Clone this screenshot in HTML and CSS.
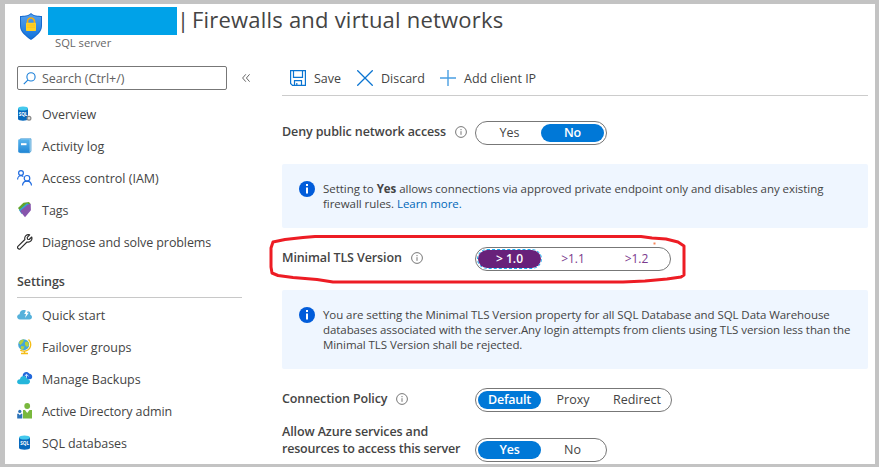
FILE: index.html
```html
<!DOCTYPE html>
<html lang="en">
<head>
<meta charset="utf-8">
<title>Firewalls and virtual networks</title>
<link rel="stylesheet" href="styles.css">
</head>
<body>
<div class="page">
  <header class="header">
    <svg class="shield" viewBox="0 0 22 27"><defs><linearGradient id="sh" x2="0" y2="1"><stop stop-color="#55a2ef"/><stop offset="1" stop-color="#1273dc"/></linearGradient></defs><path d="M11 0C8 3 4 2.600 0 3v10c0 6 6 10.500 11 14 5-3.500 11-8 11-14V3c-4-.4-8 0-11-3z" fill="#1769cd"/><path d="M11 1.200C8 3.700 4 3.500 1 3.900V13c0 5.500 5.500 9.500 10 12.700C15.500 22.500 21 18.500 21 13V3.900c-3-.4-7-.2-10-2.700z" fill="url(#sh)"/><path d="M7.500 10V8.500a3.500 3.500 0 0 1 7 0V10" fill="none" stroke="#f3ab12" stroke-width="1.700"/><rect x="6" y="9.700" width="10" height="8.300" rx=".7" fill="#ffd226"/><path d="M7 12h8M7 14.200h8" stroke="#f8b91b" stroke-width=".7"/></svg>
    <div class="heading">
      <div class="title-row"><span class="redacted"></span><span class="bar">|</span><h1>Firewalls and virtual networks</h1></div>
      <div class="subtitle">SQL server</div>
    </div>
  </header>
  <div class="body">
    <aside class="sidebar">
      <div class="search-row">
        <div class="search"><svg width="13" height="13" viewBox="0 0 13 13" fill="none" stroke="#1a7fd8" stroke-width="1.100"><circle cx="8" cy="4.900" r="4.100"/><path d="M5 7.900.8 12.200"/></svg><span>Search (Ctrl+/)</span></div>
        <svg class="collapse" width="8" height="8" viewBox="0 0 8 8" fill="none" stroke="#666"><path d="M3.800.3.600 4l3.200 3.700M7.600.3 4.400 4l3.200 3.700"/></svg>
      </div>
      <nav class="nav">
        <a class="item"><svg class="icon" viewBox="0 0 16 16"><path d="M1 2.500v10.500C1 15.300 11 15.300 11 13V2.500z" fill="#0869bd"/><ellipse cx="6" cy="2.500" rx="5" ry="2" fill="#45c9ed"/><text x="1.700" y="9.500" class="sql">SQL</text><circle cx="12" cy="12.300" r="1.900" fill="#ddd" stroke="#888" stroke-width="1.200"/></svg><span>Overview</span></a>
        <a class="item"><svg class="icon" viewBox="0 0 16 16"><defs><linearGradient id="bk" x2="0" y2="1"><stop stop-color="#5ab5ed"/><stop offset="1" stop-color="#2086d5"/></linearGradient></defs><path d="M3.500.8H14v12.500l-1.500 1.400H3.500z" fill="#b9e0f5" stroke="#338fcf" stroke-width=".7"/><path d="M2.300 1.300h10.400v13.400H2.300A1.100 1.100 0 0 1 1.200 13.600V2.400a1.100 1.100 0 0 1 1.100-1.100z" fill="url(#bk)"/><path d="M4 6.200h5.500" stroke="#fff" stroke-width="2"/></svg><span>Activity log</span></a>
        <a class="item"><svg class="icon" viewBox="0 0 16 16" fill="none" stroke="#1f6be0" stroke-width="1.200"><circle cx="4" cy="3" r="2.400"/><path d="M.6 9.500C.6 7.500 2 5.700 4 5.700c1 0 1.700.3 2.300.9"/><circle cx="10" cy="8.300" r="2.800"/><path d="M5.500 15.500c.2-2.700 2-4.400 4.500-4.400s4.300 1.700 4.500 4.400"/></svg><span class="t-iam">Access control (IAM)</span></a>
        <a class="item"><svg class="icon" viewBox="0 0 16 16"><path d="M1 6 6.500.7 12 0l1.500 2L5 11.500z" fill="#63a52b"/><path d="M2 8 10 1.200l2.500 1.300L4.500 12z" fill="#31a4d4"/><path d="m3 9 8-6.500 2.700-.7.200 6.500L8 15.300z" fill="#8755ac"/></svg><span>Tags</span></a>
        <a class="item"><svg class="icon" viewBox="0 0 16 16" fill="none" stroke="#2d2d2d" stroke-width="1.150" stroke-linejoin="round"><path d="M12.700.8C9.800-.1 7 2.400 7.900 5.500L.9 12.300c-1.200 1.500.9 3.600 2.400 2.400L10 8c3.300.8 5.700-2 4.700-5l-2.500 2.500-1.700-.3-.3-1.800z"/></svg><span class="t-diag">Diagnose and solve problems</span></a>
        <h2 class="section">Settings</h2>
        <a class="item"><svg class="icon" viewBox="0 0 16 16"><path d="M3 12.500C-.8 12.500-.7 7.400 2.600 7.200 2.600 3 7.500 1.600 9.600 4.500c3-1 4.300 1.300 3.600 3.200C16 8.500 15.300 12.500 12.500 12.500z" fill="#55b1db"/><path d="M9.700 2 7.200 7h1.800l-1 4L11.800 5.700H9.900L11.800 2z" fill="#fff"/></svg><span>Quick start</span></a>
        <a class="item"><svg class="icon" viewBox="0 0 16 16"><path d="M11.500.5C15.700 5 13.500 11.500 7.500 12.100c-1.500.1-3-.2-4.200-1" fill="none" stroke="#f5bd16" stroke-width="1.300"/><path d="M7.500 12V14.500M4 14.500h7" stroke="#f5bd16" stroke-width="1.500"/><circle cx="6.700" cy="5.700" r="5.500" fill="#43a6d9"/><path d="M2 4c1-3 4-3.800 5-3.200l-1 2.500L3.500 6zM8 3l3-.5 1 4-2 1.500-2-2zM4 7l3.500.5L6 11 3.800 10z" fill="#b4d13c"/></svg><span>Failover groups</span></a>
        <a class="item"><svg class="icon" viewBox="0 0 16 16"><path d="M6.500 7.500C3.500 2.500 9.500-1.200 12.500 2.800 16 3 16 8 13 8.200z" fill="#2168db"/><path d="M9.500 7.500V3.400L7.500 5.200M9.500 3.400 11.500 5.200" fill="none" stroke="#d4e7ff"/><path d="M3 13.300c-4 0-3.700-5 0-5 .5-4.300 6.600-4 6.800-.5 4.200-.1 4.200 5.500.4 5.500z" fill="#24b6db"/></svg><span>Manage Backups</span></a>
        <a class="item"><svg class="icon" viewBox="0 0 16 16"><circle cx="10.200" cy="3" r="2.900" fill="#79b83d"/><path d="M6 7h2l2.200 3L12.500 7H15v8.500H6z" fill="#79b83d"/><circle cx="2.800" cy="8.400" r="1.600" fill="#2c73b9"/><path d="M.2 10.700h1.500l1.200 1.500 1.100-1.500h1.300v4.800H.2z" fill="#2c73b9"/></svg><span class="t-ad">Active Directory admin</span></a>
        <a class="item"><svg class="icon" viewBox="0 0 16 16"><path d="M2 2.500v10.500c0 2.300 11 2.300 11 0V2.500z" fill="#0869bd"/><ellipse cx="7.500" cy="2.500" rx="5.500" ry="2" fill="#45c9ed"/><text x="3.300" y="10" class="sql">SQL</text></svg><span class="t-dbs">SQL databases</span></a>
      </nav>
    </aside>
    <main class="main">
      <div class="toolbar">
        <span class="cmd save"><svg width="16" height="16" viewBox="0 0 16 16" fill="none" stroke="#0a74d1" stroke-width="1.200"><path d="M.6.6h14.800v14.800H2.500L.6 13.500zM3.500.6v6.800h9V.6M4.500 15.400v-4.800h7v4.800M6.800 13v2.400"/></svg><span class="cmd-text">Save</span></span>
        <span class="cmd discard"><svg width="16" height="16" viewBox="0 0 16 16" stroke="#0a74d1" stroke-width="1.300"><path d="m.3.3 15.400 15.400M15.700.3.300 15.700"/></svg><span class="cmd-text">Discard</span></span>
        <span class="cmd"><svg width="16" height="16" viewBox="0 0 16 16" stroke="#4a9fe2" stroke-width="1.400"><path d="M8 0v16M0 8h16"/></svg><span class="cmd-text">Add client IP</span></span>
      </div>
      <div class="field deny">
        <div class="label"><span>Deny public network access</span><svg class="info" viewBox="0 0 12 12"><circle cx="6" cy="6" r="5.400"/><path d="M6 5.200v3.600M6 3v1.200"/></svg></div>
        <div class="toggle two"><span class="opt"><b>Yes</b></span><span class="opt on"><b>No</b></span></div>
      </div>
      <section class="notice first">
        <svg class="badge" viewBox="0 0 16 16"><circle cx="8" cy="8" r="8" fill="#015cda"/><path d="M8 6.500v6M8 3v2" stroke="#fff" stroke-width="2"/></svg>
        <p><span>Setting to <strong>Yes</strong> allows connections via approved private endpoint only and disables any existing</span><br><span>firewall rules. <a class="link">Learn more.</a></span></p>
      </section>
      <div class="field tls">
        <div class="label"><span>Minimal TLS Version</span><svg class="info" viewBox="0 0 12 12"><circle cx="6" cy="6" r="5.400"/><path d="M6 5.200v3.600M6 3v1.200"/></svg></div>
        <div class="toggle versions"><span class="opt on"><b>&gt; 1.0</b></span><span class="opt"><b>&gt;1.1</b></span><span class="opt"><b>&gt;1.2</b></span></div>
      </div>
      <section class="notice second">
        <svg class="badge" viewBox="0 0 16 16"><circle cx="8" cy="8" r="8" fill="#015cda"/><path d="M8 6.500v6M8 3v2" stroke="#fff" stroke-width="2"/></svg>
        <p><span>You are setting the Minimal TLS Version property for all SQL Database and SQL Data Warehouse</span><br><span>databases associated with the server.Any login attempts from clients using TLS version less than the</span><br><span>Minimal TLS Version shall be rejected.</span></p>
      </section>
      <div class="field policy">
        <div class="label"><span>Connection Policy</span><svg class="info" viewBox="0 0 12 12"><circle cx="6" cy="6" r="5.400"/><path d="M6 5.200v3.600M6 3v1.200"/></svg></div>
        <div class="toggle three"><span class="opt on"><b>Default</b></span><span class="opt"><b>Proxy</b></span><span class="opt"><b>Redirect</b></span></div>
      </div>
      <div class="field allow">
        <div class="label multi"><span>Allow Azure services and</span><br><span class="t-resources">resources to access this server</span></div>
        <div class="toggle two"><span class="opt on"><b>Yes</b></span><span class="opt"><b>No</b></span></div>
      </div>
    </main>
  </div>
  <svg class="annotation" width="430" height="60" viewBox="0 0 430 60" fill="none" stroke="#ed1c24" stroke-width="3" stroke-linejoin="round"><path d="M51 9.500H377L388 11l14 1 12 3 6 4v29l-3 2-14 2-22 2-22 1H69L53 52.500l-24-2-15-2-6-2.500-1-6V21l2-6 12-2.500 18-2z"/><path d="M389.500 16.500h2" stroke="#f58558" stroke-width="2"/></svg>
</div>
</body>
</html>
```
FILE: styles.css
```css
* { box-sizing: border-box; }
body { margin: 0; width: 879px; height: 467px; overflow: hidden; background: #c3c3c3; padding: 4px 4px 3px 5px; font: 12.500px/17px "Open Sans", "Noto Sans", sans-serif; color: #444; }
.page { position: relative; width: 870px; height: 460px; overflow: hidden; background: #fff; }
.page span { white-space: nowrap; }
.header { display: flex; height: 62px; padding-left: 15px; }
.shield { width: 22px; height: 27px; margin-top: 9px; }
.heading { padding: 3px 0 0 6px; }
.title-row { display: flex; height: 28px; align-items: center; }
.redacted { width: 129px; height: 28px; background: #00a2e8; }
.bar { width: 12px; text-align: center; font-size: 22px; line-height: 24px; margin-top: -4px; }
h1 { margin: -5px 0 0 3px; font-size: 22px; letter-spacing: .21px; font-weight: 400; line-height: 24px; white-space: nowrap; }
.subtitle { margin: -1px 0 0 7px; font-size: 11.200px; color: #666; line-height: 17px; }
.body { display: flex; }
.sidebar { width: 277px; flex: none; padding-left: 12px; }
.search-row { display: flex; align-items: center; height: 24px; }
.search { width: 210px; height: 24px; border: 1px solid #777; border-radius: 2px; display: flex; align-items: center; padding-left: 5px; gap: 6px; color: #606060; }
.collapse { margin-left: 15px; }
.nav { padding-top: 8px; }
.item { display: flex; height: 32px; align-items: center; gap: 9px; }
.icon { width: 16px; height: 16px; flex: none; }
.sql { font: 700 4.600px "Open Sans", sans-serif; fill: #fff; }
.t-diag { letter-spacing: -.09px; }
.t-ad, .t-dbs { letter-spacing: -.08px; }
.section { margin: 0 0 1px; width: 225px; height: 40px; padding-top: 15px; border-bottom: 1px solid #c8c8c8; font-size: 12.500px; line-height: 17px; font-weight: 600; letter-spacing: -.08px; }
.main { width: 586px; }
.toolbar { display: flex; align-items: center; height: 30px; padding: 0 0 6px 8px; border-bottom: 1px solid #ccc; }
.cmd { display: flex; align-items: center; gap: 8px; }
.cmd-text { padding-top: 1px; }
.save { width: 67px; }
.discard { width: 83px; }
.field { display: flex; height: 24px; }
.deny { margin-top: 25px; }
.tls { margin-top: 19px; }
.policy { margin-top: 19px; }
.allow { margin-top: 26px; }
.label { width: 193px; display: flex; align-items: center; gap: 9px; font-weight: 600; height: 21px; color: #444; letter-spacing: -.11px; }
.multi { display: block; height: 34px; margin-top: -15px; }
.t-resources { letter-spacing: -.19px; }
.info { width: 12px; height: 12px; fill: none; stroke: #777; stroke-width: 1; }
.toggle { height: 24px; border: 1px solid #777; border-radius: 12px; padding: 2px; display: grid; }
.toggle b { font-weight: 400; }
.two { width: 132px; grid-template-columns: 63px 63px; }
.versions { width: 196px; grid-template-columns: 63px 64px 63px; color: #7b3a8d; }
.three { width: 197px; grid-template-columns: 63px 64px 64px; }
.opt { height: 18px; line-height: 18px; border-radius: 9px; text-align: center; }
.on { background: #0078d7; color: #fff; }
.on b { font-weight: 600; letter-spacing: -.25px; }
.versions .opt { font-size: 12px; }
.versions .on { background: #68217a; outline: 1px dashed #18a9f0; }
.versions .on b { letter-spacing: 0; }
.notice { background: #eff6ff; border-radius: 2px; display: flex; padding: 17px 0 0 17px; font-size: 11.500px; line-height: 15px; letter-spacing: -.06px; }
.first { height: 64px; margin-top: 19px; letter-spacing: -.045px; }
.second { height: 79px; margin-top: 19px; letter-spacing: -.07px; }
.notice p { margin: 0 0 0 8px; }
.badge { width: 16px; height: 16px; flex: none; }
.link { color: #0067b8; }
.annotation { position: absolute; left: 259px; top: 223px; }
```
